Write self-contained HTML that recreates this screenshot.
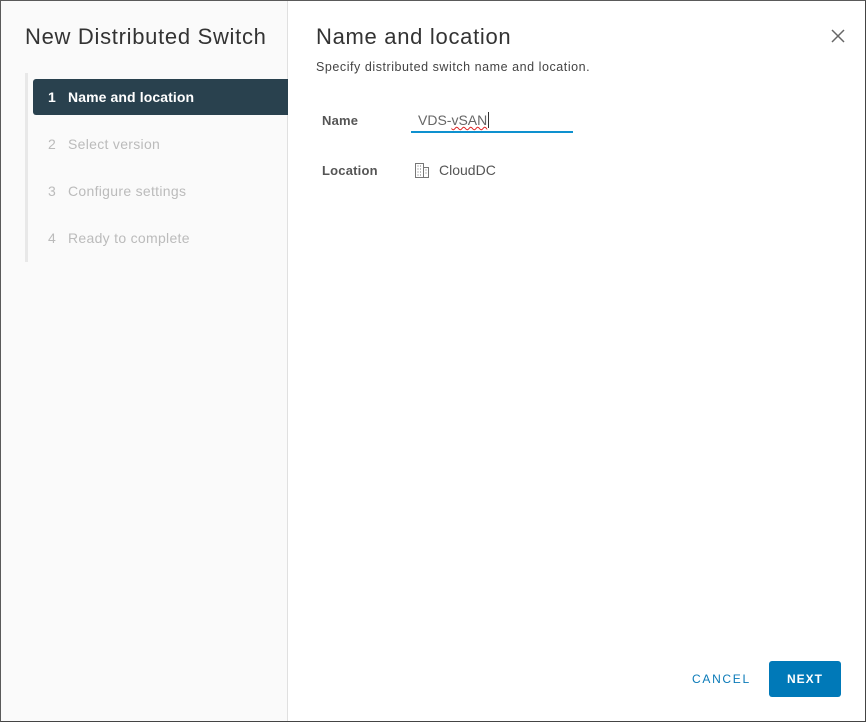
<!DOCTYPE html>
<html><head><meta charset="utf-8"><style>
*{box-sizing:border-box;margin:0;padding:0}
body{width:866px;height:722px;overflow:hidden;background:#fff;font-family:"Liberation Sans",sans-serif;position:relative}
.frame{position:absolute;left:0;top:0;width:866px;height:722px;border:1px solid #5a5a5a;border-right-color:#444;border-bottom-color:#444}
.left{position:absolute;left:1px;top:1px;width:287px;height:720px;background:#fafafa;border-right:1px solid #e0e0e0}
.title{position:absolute;left:25px;top:24px;font-size:22px;color:#333;font-weight:normal;letter-spacing:0.7px}
.rail{position:absolute;left:25px;top:73px;width:3px;height:189px;background:#e8e8e8}
.step{position:absolute;left:33px;width:255px;height:36px;font-size:14px;color:#bbb;line-height:36px;padding-left:15px;letter-spacing:0.3px}
.step span{display:inline-block;width:20px}
.step.active{background:#29414e;color:#fff;font-weight:bold;border-radius:3px 0 0 3px;letter-spacing:0.1px}
.h{position:absolute;left:316px;top:24px;font-size:22px;color:#333;letter-spacing:0.7px}
.sub{position:absolute;left:316px;top:60px;font-size:12.5px;color:#444;letter-spacing:0.55px}
.close{position:absolute;left:830px;top:28px}
.lbl{position:absolute;left:322px;font-size:13px;font-weight:bold;color:#555;letter-spacing:0.2px}
.inp{position:absolute;left:411px;top:108px;width:162px;height:25px;border-bottom:2px solid #0e91cf;font-size:14px;color:#666;padding-left:7px;line-height:24px}
.loc{position:absolute;left:439px;top:162px;font-size:14px;color:#555}
.cancel{position:absolute;left:692px;top:672px;font-size:12px;color:#0a7ab8;letter-spacing:1.7px}
.next{position:absolute;left:769px;top:661px;width:72px;height:36px;background:#0079b8;border-radius:3px;color:#fff;font-size:12px;font-weight:bold;letter-spacing:1px;text-align:center;line-height:36px}
</style></head><body>
<div class="left"></div>
<div class="title">New Distributed Switch</div>
<div class="rail"></div>
<div class="step active" style="top:79px"><span>1</span>Name and location</div>
<div class="step" style="top:126px"><span>2</span>Select version</div>
<div class="step" style="top:173px"><span>3</span>Configure settings</div>
<div class="step" style="top:220px"><span>4</span>Ready to complete</div>
<div class="h">Name and location</div>
<div class="sub">Specify distributed switch name and location.</div>
<svg class="close" width="16" height="16" viewBox="0 0 16 16"><path d="M2 2L14 14M14 2L2 14" stroke="#666" stroke-width="1.5"/></svg>
<div class="lbl" style="top:113px">Name</div>
<div class="inp">VDS-<span style="text-decoration:underline wavy #d22;text-decoration-thickness:1px">vSAN</span><span style="border-left:1px solid #333;margin-left:1px"></span></div>
<div class="lbl" style="top:163px">Location</div>
<svg style="position:absolute;left:415px;top:163px" width="14" height="15" viewBox="0 0 14 15"><rect x="0.5" y="0.5" width="8" height="14" fill="none" stroke="#777"/><rect x="8.5" y="4.5" width="5" height="10" fill="none" stroke="#777"/><path d="M2.5 3h1M5 3h1M2.5 6h1M5 6h1M2.5 9h1M5 9h1M2.5 12h1M5 12h1M10.5 7h1M10.5 10h1" stroke="#777"/></svg>
<div class="loc">CloudDC</div>
<div class="cancel">CANCEL</div>
<div class="next">NEXT</div>
<div class="frame"></div>
</body></html>
